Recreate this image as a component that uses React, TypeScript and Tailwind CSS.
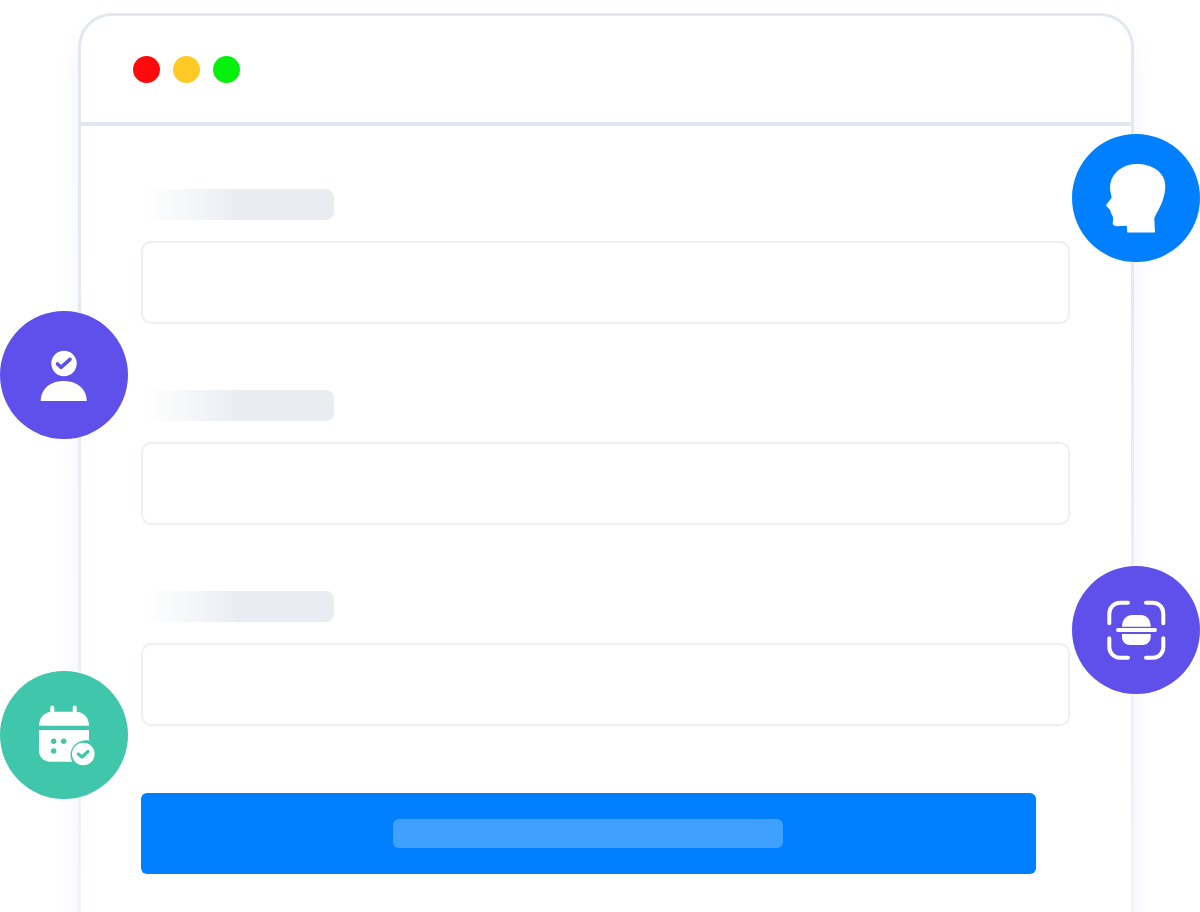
import React from "react";

function Field() {
  return (
    <div className="flex flex-col gap-[21px]">
      <div className="ml-1 h-[31px] w-[189px] rounded-r-[8px] bg-linear-to-r from-white to-[#e9edf2] to-50%" />
      <div className="h-[83px] w-[929px] rounded-[10px] border-2 border-[#edeff5] bg-white" />
    </div>
  );
}

function Badge({ color, className, children }: { color: string; className: string; children: React.ReactNode }) {
  return (
    <svg viewBox="0 0 128 128" className={`absolute h-32 w-32 ${className}`}>
      <circle cx="64" cy="64" r="64" fill={color} />
      {children}
    </svg>
  );
}

export default function App() {
  return (
    <div className="relative h-[912px] w-[1200px] overflow-hidden bg-white">
      <div className="ml-[78px] mt-[13px] h-[960px] w-[1056px] rounded-t-[34px] bg-linear-to-b from-[#e2e8f0] from-15% to-[#f1f3f9] to-[90%] p-[3px] shadow-[0_20px_20px_6px_#f7f8fd]">
        <div className="h-full rounded-t-[31px] bg-white">
          <div className="flex h-[110px] items-start gap-[13px] border-b-4 border-[#e2e7ef] pl-[52px] pt-[40px]">
            <div className="h-[27px] w-[27px] rounded-full bg-[#ff0b0b]" />
            <div className="h-[27px] w-[27px] rounded-full bg-[#ffc926]" />
            <div className="h-[27px] w-[27px] rounded-full bg-[#06f00d]" />
          </div>
          <div className="flex flex-col gap-[66px] pl-[60px] pt-[63px]">
            <Field />
            <Field />
            <Field />
            <div className="mt-px flex h-[81px] w-[895px] items-center justify-center rounded-[6px] bg-[#0080ff] pr-px">
              <div className="h-[29px] w-[390px] rounded-[6px] bg-[#40a0ff]" />
            </div>
          </div>
        </div>
      </div>

      <Badge color="#0080ff" className="left-[1072px] top-[134px]">
        <path
          fill="#fff"
          d="M55.3 98.5 L54.7 91.7 L44.7 92.3 C41.5 92 40.5 90.5 40.7 89 C41 86 41.5 84 40.7 82.3 L39 79 L38 75.7 L34 71.7 C35 69 38.5 66 39.7 63.3 C39 60 38 57 38 54 C38 40 50 30 64.7 30 C80 30 93.3 38 93.3 52 C93.3 62 89 72 84.7 79 L82.3 84 L83 98.5 Z"
        />
      </Badge>

      <Badge color="#5f4feb" className="left-0 top-[311px]">
        <circle cx="64" cy="52.5" r="12.7" fill="#fff" />
        <path d="M57.5 53 L61 56.3 L70 48.3" fill="none" stroke="#5f4feb" strokeWidth="3.6" strokeLinecap="round" strokeLinejoin="round" />
        <path fill="#fff" d="M40.7 90 C40.7 78.3 50 70 63.7 70 C77.4 70 86.7 78.3 86.7 90 Z" />
      </Badge>

      <Badge color="#5f4feb" className="left-[1072px] top-[566px]">
        <g fill="none" stroke="#fff" strokeWidth="4" strokeLinecap="round">
          <path d="M37.3 57.3 V48 C37.3 41.5 42 36.7 48 36.7 H56" />
          <path d="M74 36.7 H81 C87 36.7 91.3 41.5 91.3 48 V57.3" />
          <path d="M37.3 72.3 V81 C37.3 87 42 91.7 48 91.7 H56" />
          <path d="M74 91.7 H81 C87 91.7 91.3 87 91.3 81 V72.3" />
          <path d="M46 64 H83" />
        </g>
        <path fill="#fff" d="M50 60.7 C50 54 54 49 60 49 H69 C75 49 78.7 54 78.7 60.7 Z" />
        <path fill="#fff" d="M50 68 H78.7 V71 C78.7 75.5 75 79 70.5 79 H58 C53.5 79 50 75.5 50 71 Z" />
      </Badge>

      <Badge color="#40c6aa" className="left-0 top-[671px]">
        <path d="M52.3 36.5 V44 M74.7 36.5 V44" stroke="#fff" strokeWidth="4" strokeLinecap="round" />
        <path fill="#fff" d="M39 54.7 C39 46 45 40.7 52 40.7 H76 C83 40.7 89 46 89 54.7 Z" />
        <path fill="#fff" d="M39 59 H89 V69.5 C79 68 70 75 70.5 85 C70.6 87.5 71.5 89.5 72.5 90.7 H50 C44 90.7 39 86 39 80 Z" />
        <circle cx="53.7" cy="70.3" r="2.7" fill="#40c6aa" />
        <circle cx="63.7" cy="70.3" r="2.7" fill="#40c6aa" />
        <circle cx="53.7" cy="80" r="2.7" fill="#40c6aa" />
        <circle cx="83.3" cy="83" r="11.3" fill="#fff" />
        <path d="M78.3 83 L82 86 L88 80.5" fill="none" stroke="#40c6aa" strokeWidth="3.2" strokeLinecap="round" strokeLinejoin="round" />
      </Badge>
    </div>
  );
}
